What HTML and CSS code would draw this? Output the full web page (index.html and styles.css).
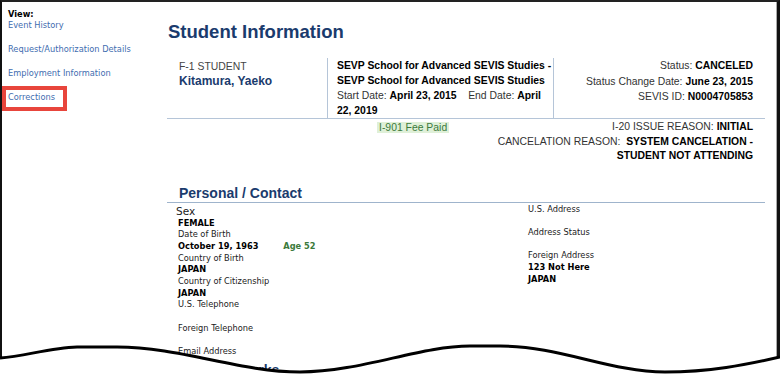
FILE: index.html
```html
<!DOCTYPE html>
<html lang="en">

<head>
    <meta charset="UTF-8">
    <meta name="viewport" content="width=device-width, initial-scale=1.0">
    <title>Student Information</title>
    <link rel="stylesheet" href="styles.css">
</head>

<body>
    <div id="frame">
        <div id="sidebar">
            <b>View:</b>
            <a href="#">Event History</a>
            <a href="#">Request/Authorization Details</a>
            <a href="#">Employment Information</a>
            <a href="#" class="marked">Corrections</a>
        </div>

        <div id="main">
            <h1>Student Information</h1>

            <div class="summary">
                <div class="student">
                    <div class="type">F-1 STUDENT</div>
                    <div class="name">Kitamura, Yaeko</div>
                </div>
                <div class="school">
                    <b>SEVP School for Advanced SEVIS Studies -</b><br>
                    <b>SEVP School for Advanced SEVIS Studies</b><br>
                    Start Date: <b>April 23, 2015</b>&nbsp;&nbsp;&nbsp; End Date: <b>April</b><br>
                    <b>22, 2019</b>
                </div>
                <div class="status">
                    Status: <b>CANCELED</b><br>
                    Status Change Date: <b>June 23, 2015</b><br>
                    SEVIS ID: <b>N0004705853</b>
                </div>
            </div>

            <div class="reasons">
                <span class="fee">I-901 Fee Paid</span>
                <div class="reason-list">
                    I-20 ISSUE REASON: <b>INITIAL</b><br>
                    CANCELATION REASON:&nbsp; <b>SYSTEM CANCELATION -</b><br>
                    <b>STUDENT NOT ATTENDING</b>
                </div>
            </div>

            <h2>Personal / Contact</h2>
            <div class="fields">
                <div class="col">
                    <div class="sex">Sex</div>
                    <div class="v">FEMALE</div>
                    <div>Date of Birth</div>
                    <div class="v">October 19, 1963 <span class="age">Age 52</span></div>
                    <div>Country of Birth</div>
                    <div class="v">JAPAN</div>
                    <div>Country of Citizenship</div>
                    <div class="v">JAPAN</div>
                    <div>U.S. Telephone</div>
                    <div class="v"></div>
                    <div>Foreign Telephone</div>
                    <div class="v"></div>
                    <div>Email Address</div>
                </div>
                <div class="col">
                    <div>U.S. Address</div>
                    <div class="v"></div>
                    <div>Address Status</div>
                    <div class="v"></div>
                    <div>Foreign Address</div>
                    <div class="v">123 Not Here</div>
                    <div class="v">JAPAN</div>
                </div>
            </div>
            <h2 class="cut">Other Remarks</h2>
        </div>

        <svg class="tear" width="780" height="375" viewBox="0 0 780 375">
            <path d="M0 358 C25 356 50 348 77 347 L117 347 C180 347 240 372 300 372 C360 372 420 346 470 346 L500 346 C560 346 610 372 665 372 C710 372 745 365 780 357 L780 375 L0 375 Z" fill="#fff"/>
            <path d="M0 358 C25 356 50 348 77 347 L117 347 C180 347 240 372 300 372 C360 372 420 346 470 346 L500 346 C560 346 610 372 665 372 C710 372 745 365 780 357" fill="none" stroke="#000" stroke-width="3"/>
        </svg>
    </div>
</body>

</html>
```

FILE: styles.css
```css
* {
    box-sizing: border-box;
}

html,
body {
    margin: 0;
    padding: 0;
}

body {
    width: 780px;
    height: 375px;
    overflow: hidden;
    background-color: #fff;
    font-family: "Liberation Sans", Arial, sans-serif;
}

#frame {
    position: relative;
    display: flex;
    height: 375px;
    border-top: 2px solid #222;
    border-left: 2px solid #111;
    border-right: 3px solid #111;
    box-shadow: inset -1px 0 0 #aaa;
}

/* left menu */
#sidebar {
    width: 165px;
    flex: none;
    padding: 6.5px 0 0 6px;
    font-family: "DejaVu Sans", Verdana, sans-serif;
    font-size: 8.25px;
    line-height: 11px;
}

#sidebar b {
    display: block;
    color: #000;
}

#sidebar a {
    display: block;
    margin-bottom: 13px;
    color: #3f6db0;
    text-decoration: none;
}

#sidebar a.marked {
    width: fit-content;
    margin: -6px 0 0 -6px;
    padding: 2px 8px 4px 2px;
    border: 4px solid #e8453c;
}

/* main area */
#main {
    flex: 1;
    padding-right: 12px;
}

h1 {
    margin: 19px 0 15px 1px;
    font-size: 18.5px;
    line-height: 22px;
    color: #1a3b6d;
}

.summary {
    display: grid;
    grid-template-columns: 161px 226px 1fr;
    border-bottom: 1px solid #b5c5d8;
    font-size: 10.4px;
    line-height: 15px;
    color: #333;
}

.summary b,
.reasons b {
    color: #000;
}

.student {
    padding: 2px 0 0 12px;
    line-height: 14px;
    border-right: 1px solid #b5c5d8;
}

.type {
    color: #444;
}

.name {
    font-size: 12px;
    font-weight: bold;
    color: #1a3b6d;
}

.school {
    padding-left: 9px;
    white-space: nowrap;
    border-right: 1px solid #b5c5d8;
}

.status {
    padding-right: 12px;
    text-align: right;
    line-height: 15.5px;
}

.reasons {
    display: flex;
    justify-content: space-between;
    align-items: flex-start;
    padding: 1px 12px 0 210px;
    font-size: 10.4px;
    line-height: 14.5px;
    color: #333;
}

.fee {
    margin-top: 1.5px;
    padding: 0 2px;
    line-height: 11px;
    background-color: #dff0d8;
    color: #3c7a3c;
}

.reason-list {
    text-align: right;
}

h2 {
    margin: 21px 0 0;
    padding-left: 12px;
    font-size: 14px;
    line-height: 17px;
    color: #1a3b6d;
    border-bottom: 1px solid #9fb4cc;
}

h2.cut {
    margin-top: 4px;
    border-bottom: none;
}

.fields {
    display: grid;
    grid-template-columns: 361px 1fr;
    padding-top: 1px;
    font-family: "DejaVu Sans", Verdana, sans-serif;
    font-size: 8.25px;
    line-height: 11.7px;
    color: #222;
}

.fields .col:first-child {
    padding-left: 11px;
}

.sex {
    margin-left: -2px;
    font-size: 10.5px;
    line-height: 14px;
}

.v {
    min-height: 11.7px;
    font-weight: bold;
    color: #000;
}

.age {
    margin-left: 22px;
    color: #3b7a3b;
}

.tear {
    position: absolute;
    left: -2px;
    top: -2px;
    pointer-events: none;
}
```
